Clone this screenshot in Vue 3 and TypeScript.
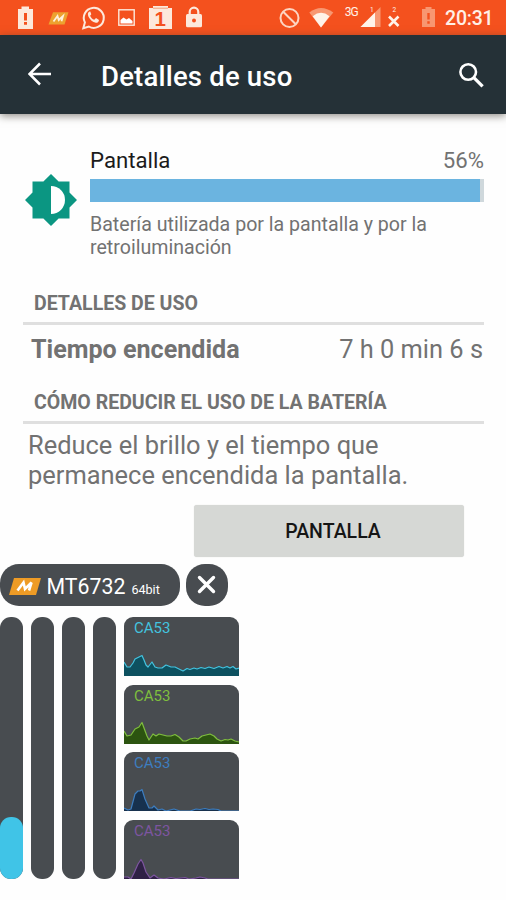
<script setup lang="ts">
interface Core {
  name: string
  stroke: string
  fill: string
  load: number
  points: number[][]
}

const cores: Core[] = [
  {
    name: 'CA53', stroke: '#43c3df', fill: '#0d5160', load: 62,
    points: [[0, 45], [3, 50], [6, 50], [9, 46], [11, 42], [15, 40], [18, 38.5], [20, 43], [22, 48], [24, 50], [28, 45], [31, 50], [34, 51], [38, 51], [42, 48], [47, 50], [51, 50], [55, 52], [59, 54], [63, 51.5], [66, 52.5], [70, 51], [73, 52], [77, 50.5], [81, 51.5], [85, 50], [90, 51.5], [95, 49.5], [99, 51], [103, 49.5], [106, 51], [109, 49.5], [112, 52], [115, 51]],
  },
  {
    name: 'CA53', stroke: '#7fbe3e', fill: '#2c5410', load: 0,
    points: [[0, 46], [3, 51], [7, 50], [11, 44], [15, 42], [18, 37.5], [20, 43], [23, 51], [25, 55], [29, 49], [32, 51], [35, 49], [39, 50], [43, 51], [47, 51], [51, 49.5], [55, 52], [59, 56], [62, 56], [66, 54], [71, 53], [74, 54], [78, 51], [82, 50], [86, 49], [90, 51], [93, 54], [97, 56], [101, 54.5], [104, 55], [107, 54], [111, 56], [115, 57]],
  },
  {
    name: 'CA53', stroke: '#3d7dbf', fill: '#17314e', load: 0,
    points: [[0, 56], [4, 58], [7, 57], [11, 42], [14, 39], [16, 39], [18, 37.5], [21, 47], [25, 56], [28, 56], [30, 54], [34, 58], [38, 57], [42, 59], [50, 57], [56, 59], [66, 59], [72, 57], [76, 57.5], [81, 56.5], [85, 57.5], [89, 57], [94, 57.5], [97, 59], [115, 59]],
  },
  {
    name: 'CA53', stroke: '#7d55a0', fill: '#2f2145', load: 0,
    points: [[0, 57], [4, 57], [7, 59], [10, 53], [14, 44], [17, 39.5], [19, 43], [22, 52], [26, 58], [30, 55], [34, 58], [40, 59], [47, 57.5], [52, 58.5], [61, 57.5], [65, 59], [72, 58], [76, 57], [81, 58], [84, 59], [115, 59]],
  },
]

const linePath = (points: number[][]): string =>
  points.map(([x, y], i) => `${i ? 'L' : 'M'}${x} ${y}`).join('')
const areaPath = (points: number[][]): string => `${linePath(points)}V60H0Z`

const usage = 99
</script>

<template>
  <div class="screen">
    <header class="status">
      <svg class="status-icons" width="210" height="35" viewBox="0 0 210 35">
        <g fill="#fde9dc">
          <path d="M18 9h3.500V6.500h7.500V9H33v20H18z" />
          <path class="warn" d="M24 13h3v7.500h-3zM24 22h3v2.800h-3z" />
        </g>
        <path d="M53 12.200h15.500L64.500 24.500H48.500z" fill="#eda22f" />
        <path d="M53.500 21.500l4-5.500 1.200 4 4.300-4-1.500 5.200" fill="none" stroke="#fff0dc" stroke-width="1.800" />
        <path d="M83.300 28.200l1.600-5.800A10 10 0 1 1 88.800 26.500z" fill="none" stroke="#fde9dc" stroke-width="2" />
        <path d="M89.700 11.500c-2 .8-2.300 3-1.200 5.200 1.500 3 4.200 5.400 7.300 6 1.700.2 3-.8 3.200-2.800l-3-1.800-1.700 1.700c-2-.8-3.400-2.200-4.200-4.100l1.200-1.500-1-2.700z" fill="#fde9dc" />
        <rect x="118.800" y="9.800" width="15.400" height="15.400" fill="none" stroke="#fde9dc" stroke-width="1.400" />
        <path d="M120.500 23.500v-3.500l3-2.500 3 2 2.500-1.500 3.500 3v2.500z" fill="#fff" />
        <path d="M149 8h4V6h15v2h4v21h-23z" fill="#fde9dc" />
        <path d="M153 8.200h15" stroke="#f0a07c" stroke-width="1" />
        <text x="160.300" y="26.300" class="one">1</text>
        <path d="M189.700 14.500V12a4.300 4.300 0 0 1 8.600 0v2.500" fill="none" stroke="#fde9dc" stroke-width="2.200" />
        <rect x="186" y="14" width="16" height="13.300" rx="1.500" fill="#fde9dc" />
        <circle cx="194" cy="20.500" r="2" fill="#f4511e" />
      </svg>
      <svg class="status-icons" width="168" height="35" viewBox="275 0 168 35">
        <circle cx="289.500" cy="18" r="9" fill="none" stroke="#fdd5c2" stroke-width="2" />
        <path d="M283.200 11.700l12.600 12.600" stroke="#fdd5c2" stroke-width="2" />
        <path d="M309.300 12.500Q321 3.500 333.300 12.500L321 27.500z" fill="#f89771" />
        <path d="M312.700 16.200Q321 9.500 329.500 16.200L321 27.500z" fill="#fff3e9" />
        <text x="344.700" y="16.200" class="net">3G</text>
        <path d="M360.500 27L380.500 7v20z" fill="#f89771" />
        <path d="M360.500 27L375 12.500V27z" fill="#fff3e9" />
        <text x="370" y="11.500" class="sim">1</text>
        <text x="392.500" y="11.500" class="sim">2</text>
        <path d="M389 16.500l9.500 9.500M398.500 16.500L389 26" stroke="#fff3e9" stroke-width="2.600" />
        <path d="M422 9h3.500V7h6V9h3.500v18h-13z" fill="#f89771" />
        <path d="M427.300 13h2.400v6.500h-2.400zM427.300 21.300h2.400v2.500h-2.400z" fill="#f4511e" />
      </svg>
      <span class="clock">20:31</span>
    </header>

    <nav class="appbar">
      <svg class="back" width="24" height="24" viewBox="0 0 24 24">
        <path d="M23 12H2M12 1.500L1.500 12 12 22.500" fill="none" stroke="#fff" stroke-width="2.500" />
      </svg>
      <h1>Detalles de uso</h1>
      <svg class="search" width="27" height="27" viewBox="0 0 27 27">
        <circle cx="10.200" cy="10" r="7.800" fill="none" stroke="#fff" stroke-width="2.600" />
        <path d="M15.600 15.400l9 9" stroke="#fff" stroke-width="3.200" />
      </svg>
    </nav>

    <main>
      <section class="summary">
        <svg class="bright" width="52" height="52" viewBox="0 0 52 52">
          <path d="M26 0l7.600 7.600H44.500v10.800L52 26l-7.500 7.600v10.900H33.600L26 52l-7.600-7.500H7.500V33.600L0 26l7.500-7.600V7.600h10.900z" fill="#0b9682" />
          <path d="M26 12a14 14 0 0 1 0 28z" fill="#fff" />
        </svg>
        <div class="info">
          <div class="row"><span class="name">Pantalla</span><span class="pct">56%</span></div>
          <div class="track"><div class="fill" :style="{ width: usage + '%' }"></div></div>
          <p>Batería utilizada por la pantalla y por la<br>retroiluminación</p>
        </div>
      </section>

      <h2>DETALLES DE USO</h2>
      <div class="time"><b>Tiempo encendida</b><span class="dur">7 h 0 min 6 s</span></div>
      <h2 class="second">CÓMO REDUCIR EL USO DE LA BATERÍA</h2>
      <p class="tip">Reduce el brillo y el tiempo que<br>permanece encendida la pantalla.</p>
      <button>PANTALLA</button>
    </main>

    <aside>
      <div class="chips">
        <div class="chip">
          <svg width="32" height="17" viewBox="0 0 32 17">
            <path d="M5 0h27l-5 17H0z" fill="#ee9b25" />
            <path d="M8.500 12.500l6-8 1.500 6.500 6.500-6.500-2.500 8" fill="none" stroke="#fff" stroke-width="2.600" />
          </svg>
          <span class="model">MT6732</span><small>64bit</small>
        </div>
        <div class="close">
          <svg width="20" height="20" viewBox="0 0 20 20">
            <path d="M2.500 2.500l14 14M16.500 2.500l-14 14" stroke="#fff" stroke-width="3.400" stroke-linecap="round" />
          </svg>
        </div>
      </div>
      <div class="monitor">
        <div class="loads">
          <div v-for="(core, i) in cores" :key="i" class="load">
            <div v-if="core.load" class="level" :style="{ height: core.load + 'px' }"></div>
          </div>
        </div>
        <div class="graphs">
          <div v-for="(core, i) in cores" :key="i" class="graph">
            <span :style="{ color: core.stroke }">{{ core.name }}</span>
            <svg width="115" height="59" viewBox="0 0 115 59">
              <path :d="areaPath(core.points)" :fill="core.fill" />
              <path :d="linePath(core.points)" fill="none" :stroke="core.stroke" stroke-width="1.200" stroke-linejoin="round" />
            </svg>
          </div>
        </div>
      </div>
    </aside>
  </div>
</template>

<style>
body { background: #fefefe; }
</style>

<style scoped>
.screen { width: 506px; height: 900px; overflow: hidden; display: flex; flex-direction: column; font-family: Roboto, sans-serif; color: #727272; }
.status { height: 35px; flex: none; display: flex; background: #f4511e; }
.status-icons { flex: none; display: block; }
.status-icons:nth-child(2) { margin-left: 65px; }
.warn { fill: #f4511e; }
.one { font: 700 20.500px "Liberation Sans", sans-serif; fill: #f4511e; text-anchor: middle; }
.net { font: 400 12px Roboto, sans-serif; fill: #fff3e9; letter-spacing: -.9px; }
.sim { font: 400 6.500px Roboto, sans-serif; fill: #fff3e9; }
.clock { margin-left: 2px; font-size: 19.500px; font-weight: 500; letter-spacing: -.2px; line-height: 38px; color: #fff0e6; white-space: nowrap; }
.appbar { height: 79px; flex: none; display: flex; align-items: center; background: #253137; box-shadow: 0 2px 8px rgba(70, 65, 55, .6); box-sizing: border-box; }
.back { margin: 0 0 1px 28px; }
h1 { margin: 4px 0 0 49px; font-size: 27.500px; font-weight: 500; letter-spacing: .2px; line-height: 36px; color: #fff; white-space: nowrap; flex: 1; }
.search { margin: 1px 21px 0 0; }
main { height: 450px; flex: none; display: flex; flex-direction: column; padding: 31px 22px 0 23px; box-sizing: border-box; }
.summary { display: flex; height: 126px; flex: none; }
.bright { margin: 29px 14px 0 2px; flex: none; }
.info { flex: 1; margin-left: -1px; }
.row { display: flex; justify-content: space-between; height: 34px; font-size: 22.200px; line-height: 30px; }
.name { color: #1b1b1b; }
.track { height: 23px; background: #cfd8dc; }
.fill { height: 100%; background: #6bb4e0; }
p { margin: 0; white-space: nowrap; }
.info p { margin-top: 11px; font-size: 19.600px; line-height: 23px; }
h2 { margin: 17px 0 0; height: 37px; box-sizing: border-box; padding: 4px 0 0 11px; border-bottom: 3px solid #dfdfdf; font-size: 19.550px; line-height: 24px; font-weight: 700; white-space: nowrap; flex: none; }
.time { display: flex; justify-content: space-between; height: 48px; padding: 0 1px 0 8px; font-size: 25.100px; line-height: 49px; white-space: nowrap; flex: none; }
.dur { font-size: 25.400px; }
h2.second { margin-top: 14px; }
.tip { padding: 6px 0 0 5px; font-size: 25.450px; line-height: 30px; flex: none; }
button { margin: 15px 0 0 171px; width: 270px; height: 52px; flex: none; padding: 1px 0 0 8px; border: 0; border-radius: 3px; background: #d6d8d5; font: 500 19.500px/51px Roboto, sans-serif; color: #151515; box-shadow: 0 0 1px #cfd1ce; }
.chips { display: flex; gap: 6px; height: 42px; }
.chip { width: 180px; height: 42px; border-radius: 19px; background: #484c50; display: flex; align-items: center; color: #fff; padding-left: 9px; box-sizing: border-box; white-space: nowrap; }
.chip svg { flex: none; margin-top: 2px; }
.model { margin: 3px 0 0 5.500px; font-size: 21.300px; line-height: 30px; }
small { margin: 9px 0 0 6px; font-size: 12.600px; line-height: 16px; }
.close { width: 42px; height: 42px; border-radius: 19px; background: #484c50; display: flex; align-items: center; justify-content: center; }
.monitor { display: flex; margin-top: 11px; height: 262px; }
.loads { display: flex; gap: 8.500px; width: 124px; }
.load { width: 22.500px; height: 262px; border-radius: 11px; background: #484c50; display: flex; align-items: flex-end; }
.level { width: 100%; border-radius: 11px; background: #40c4e7; }
.graphs { display: flex; flex-direction: column; justify-content: space-between; width: 115px; }
.graph { display: grid; height: 59px; border-radius: 9px 9px 0 0; background: #484c50; overflow: hidden; }
.graph > * { grid-area: 1 / 1; }
.graph svg { display: block; }
.graph span { padding: 2px 0 0 10px; font-size: 15px; line-height: 18px; }
</style>
